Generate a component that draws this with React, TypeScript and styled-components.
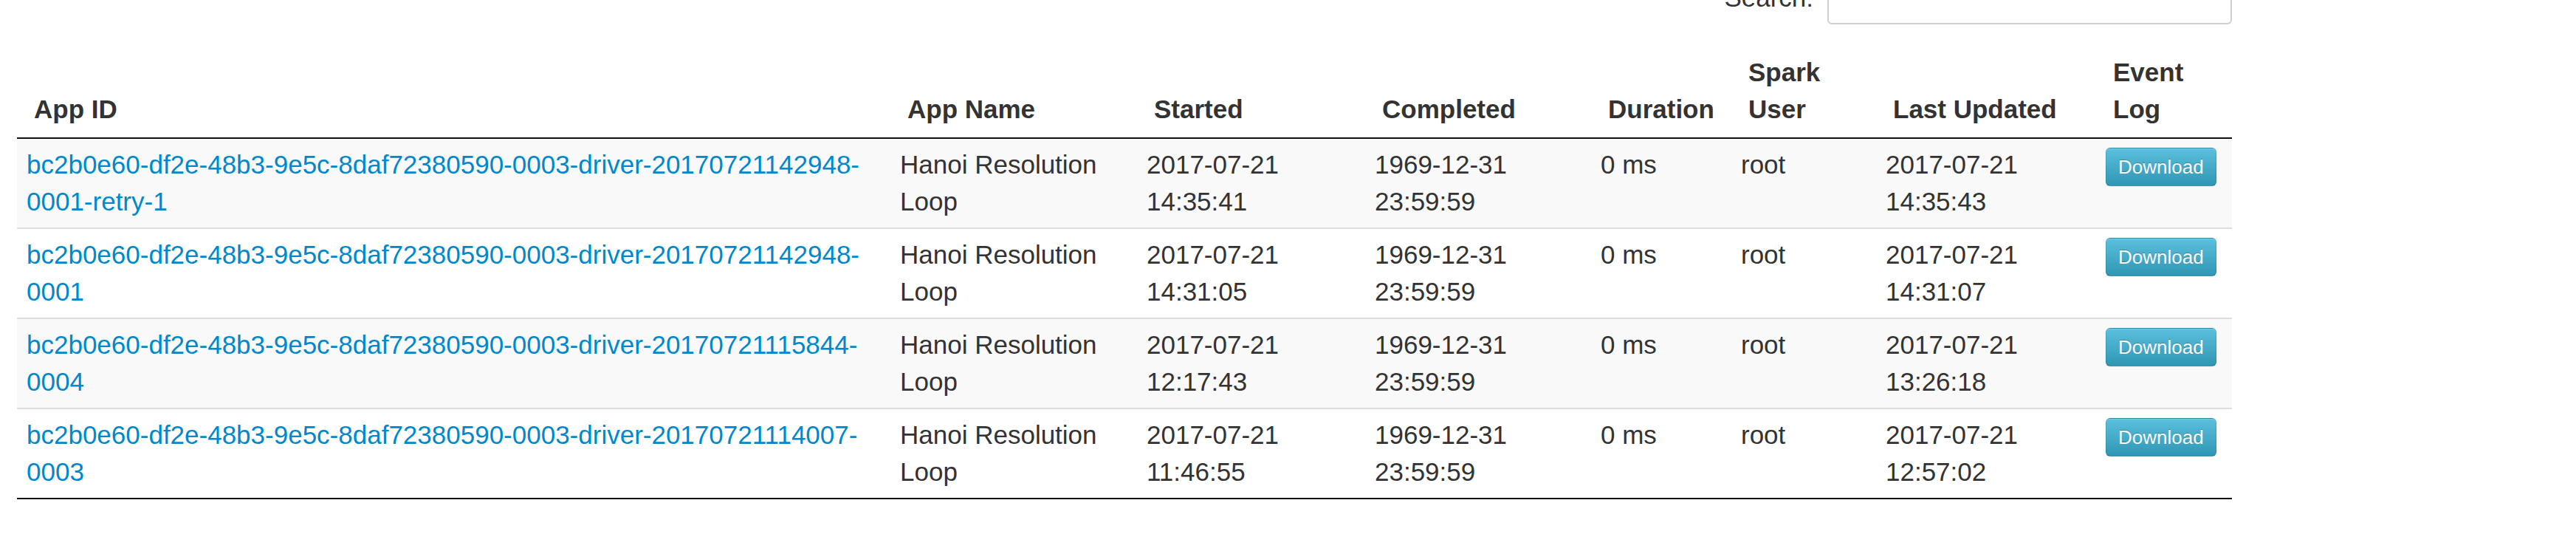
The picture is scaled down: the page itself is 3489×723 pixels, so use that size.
import styled, { createGlobalStyle } from "styled-components";

const GlobalStyle = createGlobalStyle`
  html, body {
    margin: 0;
    background: #fff;
  }
  body {
    font-family: "Liberation Sans", Arial, Helvetica, sans-serif;
    color: #333;
    overflow: hidden;
  }
`;

const Page = styled.div`
  width: 3000px;
  padding-left: 23px;
`;

const Toolbar = styled.div`
  display: flex;
  justify-content: flex-end;
  align-items: flex-end;
  height: 70px;
  margin-top: -37px;
`;

const SearchLabel = styled.label`
  font-size: 35px;
  line-height: 50px;
  margin-bottom: 11px;
`;

const SearchInput = styled.input`
  box-sizing: border-box;
  width: 548px;
  height: 70px;
  margin-left: 19px;
  border: 2px solid #cfcfcf;
  border-radius: 6px;
  background: #fff;
`;

const Table = styled.table`
  width: 3000px;
  margin-top: 27px;
  table-layout: fixed;
  border-collapse: collapse;
  border-spacing: 0;
  font-size: 35px;
  line-height: 50px;

  tbody tr:last-child td {
    border-bottom-color: #111;
  }
`;

const HeadCell = styled.th`
  text-align: left;
  vertical-align: bottom;
  font-weight: 700;
  padding: 13px 8px 13px 23px;
  border-bottom: 2px solid #111;
`;

const Row = styled.tr<{ $striped: boolean }>`
  background: ${(p) => (p.$striped ? "#f9f9f9" : "#fff")};
`;

const Cell = styled.td`
  vertical-align: top;
  padding: 10px 13px;
  border-bottom: 2px solid #ddd;
`;

const AppLink = styled.a`
  color: #0088cc;
  text-decoration: none;
`;

const DownloadButton = styled.button`
  display: inline-block;
  font-family: inherit;
  font-size: 26px;
  line-height: 50px;
  padding: 0 16px;
  color: #fff;
  text-shadow: 0 -1px 0 rgba(0, 0, 0, 0.25);
  background-color: #49afcd;
  background-image: linear-gradient(to bottom, #5bc0de, #2f96b4);
  border: 1px solid;
  border-color: rgba(0, 0, 0, 0.1) rgba(0, 0, 0, 0.1) rgba(0, 0, 0, 0.25);
  border-radius: 6px;
  box-shadow: inset 0 1px 0 rgba(255, 255, 255, 0.2),
    0 1px 2px rgba(0, 0, 0, 0.05);
  cursor: pointer;
`;

const prefix = "bc2b0e60-df2e-48b3-9e5c-8daf72380590-0003-driver-";

const apps = [
  { id: prefix + "20170721142948-0001-retry-1", started: "2017-07-21 14:35:41", updated: "2017-07-21 14:35:43" },
  { id: prefix + "20170721142948-0001", started: "2017-07-21 14:31:05", updated: "2017-07-21 14:31:07" },
  { id: prefix + "20170721115844-0004", started: "2017-07-21 12:17:43", updated: "2017-07-21 13:26:18" },
  { id: prefix + "20170721114007-0003", started: "2017-07-21 11:46:55", updated: "2017-07-21 12:57:02" },
];

const columns = [
  { label: "App ID", width: 1183 },
  { label: "App Name", width: 334 },
  { label: "Started", width: 309 },
  { label: "Completed", width: 306 },
  { label: "Duration", width: 190 },
  { label: "Spark User", width: 196 },
  { label: "Last Updated", width: 298 },
  { label: "Event Log", width: 184 },
];

function App() {
  return (
    <Page>
      <GlobalStyle />
      <Toolbar>
        <SearchLabel htmlFor="app-search">Search:</SearchLabel>
        <SearchInput id="app-search" type="search" />
      </Toolbar>
      <Table>
        <colgroup>
          {columns.map((c) => (
            <col key={c.label} style={{ width: c.width }} />
          ))}
        </colgroup>
        <thead>
          <tr>
            {columns.map((c) => (
              <HeadCell key={c.label}>{c.label}</HeadCell>
            ))}
          </tr>
        </thead>
        <tbody>
          {apps.map((app, i) => (
            <Row key={app.id} $striped={i % 2 === 0}>
              <Cell>
                <AppLink href="#">{app.id}</AppLink>
              </Cell>
              <Cell>Hanoi Resolution Loop</Cell>
              <Cell>{app.started}</Cell>
              <Cell>1969-12-31 23:59:59</Cell>
              <Cell>0 ms</Cell>
              <Cell>root</Cell>
              <Cell>{app.updated}</Cell>
              <Cell>
                <DownloadButton>Download</DownloadButton>
              </Cell>
            </Row>
          ))}
        </tbody>
      </Table>
    </Page>
  );
}

export default App;
